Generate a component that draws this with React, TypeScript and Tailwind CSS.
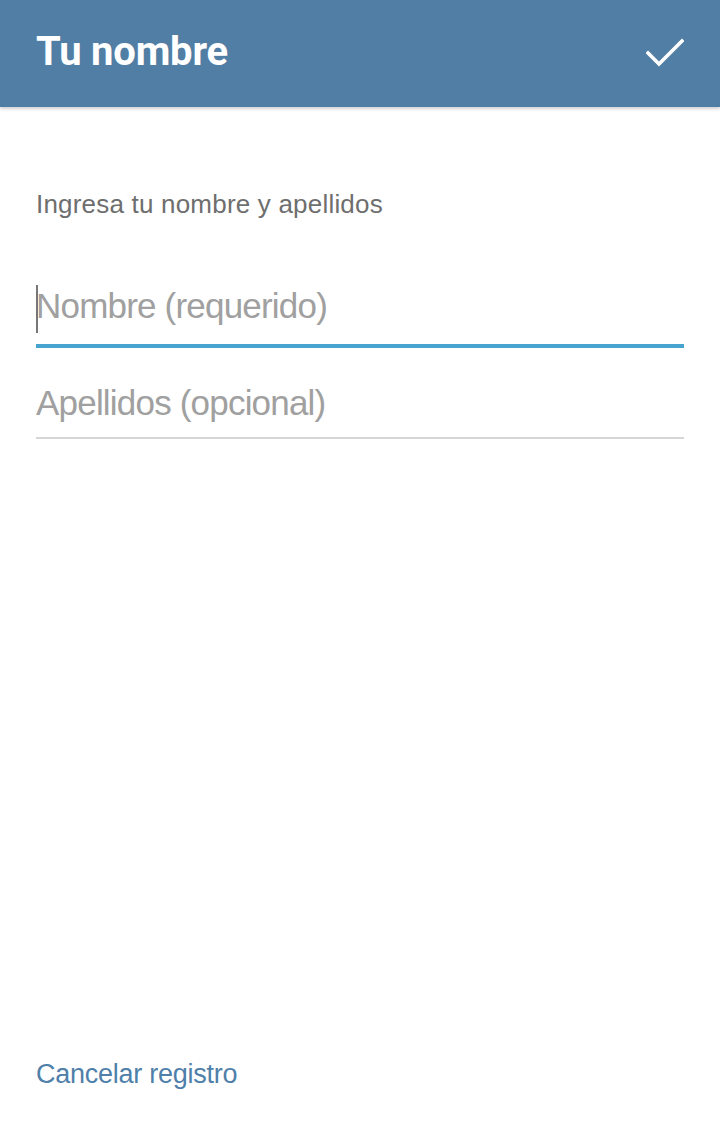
import React from 'react';

const App: React.FC = () => {
  return (
    <div className="w-[720px] h-[1131px] bg-white flex flex-col font-['Liberation_Sans',Arial,sans-serif]">
      {/* Toolbar */}
      <div className="h-[107px] bg-[#517ea4] flex items-center justify-between pl-[36px] pr-[36px] shadow-[0_2px_3px_rgba(0,0,0,0.18)] relative z-10">
        <h1 className="text-white text-[40px] font-bold font-['Roboto',sans-serif] tracking-[-0.2px] -mt-[3px]">Tu nombre</h1>
        <svg width="38" height="30" viewBox="0 0 38 30" className="-mt-[1px]">
          <path d="M2 15 L13 26 L36 3" stroke="white" strokeWidth="3.6" fill="none" strokeLinecap="square" />
        </svg>
      </div>

      {/* Form */}
      <div className="flex-1 flex flex-col px-[36px]">
        <p className="mt-[78px] text-[26px] text-[#6e6e6e] tracking-[0.2px]">Ingresa tu nombre y apellidos</p>

        <div className="mt-[56px] relative border-b-[4px] border-[#47a3cf] h-[68px] flex items-start">
          <div className="absolute left-0 top-[5px] w-[2px] h-[48px] bg-[#777]" />
          <span className="text-[35px] text-[#a0a0a0] tracking-[-0.8px] leading-none mt-[8px]">Nombre (requerido)</span>
        </div>

        <div className="mt-[35px] border-b-[2px] border-[#d6d6d6] h-[56px] flex items-start">
          <span className="text-[35px] text-[#a0a0a0] tracking-[-0.8px] leading-none mt-[2px]">Apellidos (opcional)</span>
        </div>

        <div className="flex-1" />
        <a className="mb-[37px] text-[27px] text-[#4f80aa] tracking-[-0.25px]">Cancelar registro</a>
      </div>
    </div>
  );
};

export default App;
